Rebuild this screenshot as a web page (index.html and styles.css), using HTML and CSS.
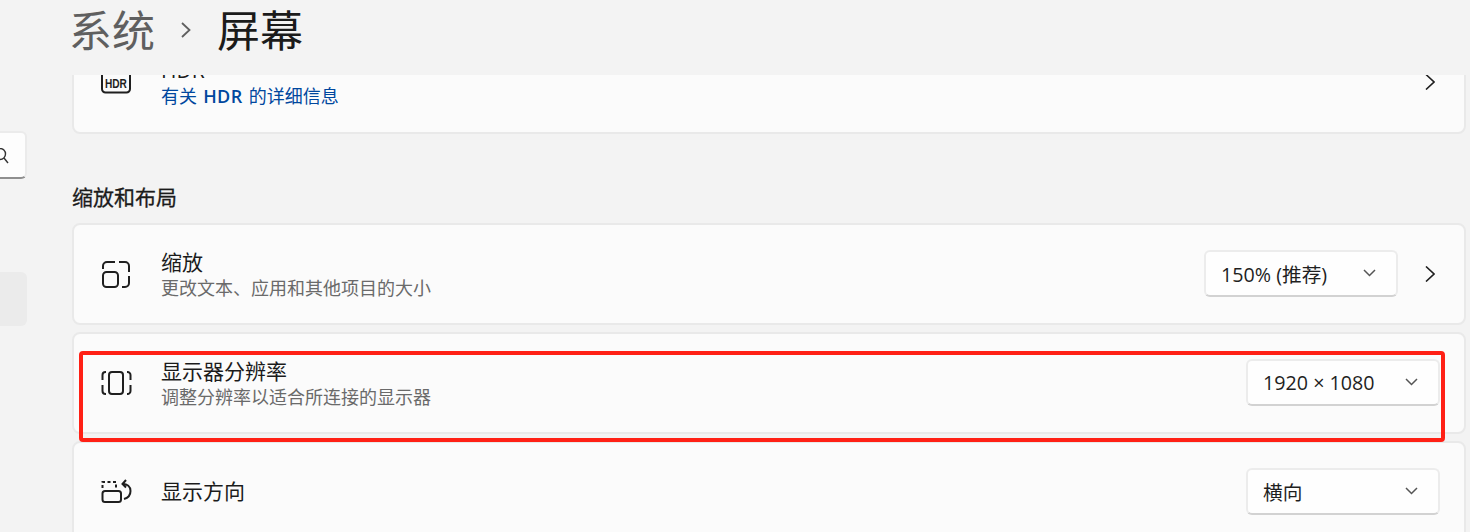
FILE: index.html
```html
<!DOCTYPE html>
<html lang="zh-CN">
<head>
<meta charset="utf-8">
<title>屏幕</title>
<link rel="stylesheet" href="styles.css">
</head>
<body>
<div class="app">
  <aside class="sidebar">
    <div class="search">
      <svg class="search-icon" width="12" height="18" viewBox="0 0 12 18"><circle cx="0" cy="6" r="5.500"/><path d="M4 10l4 5"/></svg>
    </div>
    <div class="nav-selected"></div>
  </aside>
  <main class="main">
    <header class="header">
      <span class="crumb">系统</span>
      <svg class="crumb-sep" width="12" height="18" viewBox="0 0 12 18"><path d="M2 2l7.500 7L2 16"/></svg>
      <span class="page">屏幕</span>
    </header>
    <div class="content">
      <section class="card card-first">
        <span class="icon-box">
          <svg class="icon" width="30" height="30" viewBox="0 0 30 30"><path d="M1 1v24a3.500 3.500 0 0 0 3.500 3.500h21a3.500 3.500 0 0 0 3.500-3.500V1"/></svg>
          <span class="hdr-glyph">HDR</span>
        </span>
        <div class="text">
          <div class="title">HDR</div>
          <a class="link">有关 <span class="latin">HDR</span> 的详细信息</a>
        </div>
        <svg class="chevron" width="10" height="16" viewBox="0 0 10 16"><path d="M1 .5l8 7.500-8 7.500"/></svg>
      </section>

      <h2 class="section">缩放和布局</h2>

      <section class="card">
        <span class="icon-box">
          <svg class="icon" width="30" height="30" viewBox="0 0 30 30">
            <path d="M2 10V7a4 4 0 0 1 4-4h8M18 3h6a4 4 0 0 1 4 4v6M28 17v7a4 4 0 0 1-4 4h-3"/>
            <rect x="2" y="13" width="15" height="15" rx="3.500"/>
          </svg>
        </span>
        <div class="text">
          <div class="title">缩放</div>
          <div class="sub">更改文本、应用和其他项目的大小</div>
        </div>
        <div class="select"><span>150% (推荐)</span><svg class="caret" width="13" height="8" viewBox="0 0 13 8"><path d="M1 1l5.500 5.500L12 1"/></svg></div>
        <svg class="chevron" width="10" height="16" viewBox="0 0 10 16"><path d="M1 .5l8 7.500-8 7.500"/></svg>
      </section>

      <section class="card">
        <span class="icon-box">
          <svg class="icon" width="30" height="30" viewBox="0 0 30 30">
            <rect x="8" y="4" width="14" height="22" rx="3"/>
            <path d="M5 4h-.5a3 3 0 0 0-3 3v5M1.500 17v6a3 3 0 0 0 3 3H5M26 4h.5a3 3 0 0 1 3 3v5M29.500 17v6a3 3 0 0 1-3 3H26"/>
          </svg>
        </span>
        <div class="text">
          <div class="title">显示器分辨率</div>
          <div class="sub">调整分辨率以适合所连接的显示器</div>
        </div>
        <div class="select"><span>1920 × 1080</span><svg class="caret" width="13" height="8" viewBox="0 0 13 8"><path d="M1 1l5.500 5.500L12 1"/></svg></div>
      </section>

      <section class="card">
        <span class="icon-box">
          <svg class="icon" width="32" height="30" viewBox="0 0 32 30">
            <path stroke-dasharray="3 2.500" d="M1.500 11V5h13.500v6"/>
            <rect x="1.500" y="14" width="18.500" height="11" rx="2.500"/>
            <path d="M22 7c4 0 7.500 2.500 7.500 7s-3 7-6.500 8M25 3l-3.500 4 3.500 3.500"/>
          </svg>
        </span>
        <div class="text text-single">
          <div class="title">显示方向</div>
        </div>
        <div class="select"><span>横向</span><svg class="caret" width="13" height="8" viewBox="0 0 13 8"><path d="M1 1l5.500 5.500L12 1"/></svg></div>
      </section>
    </div>
  </main>
</div>
<div class="highlight"></div>
</body>
</html>
```

FILE: styles.css
```css
* { box-sizing: border-box; }
html, body { margin: 0; height: 532px; overflow: hidden; }
body {
  position: relative;
  background: #f3f3f3;
  color: #1b1b1b;
  font-family: "Open Sans", "Noto Sans CJK SC", sans-serif;
}
.app { display: flex; height: 532px; }

.sidebar { width: 72px; flex: none; display: flex; flex-direction: column; align-items: flex-start; }
.search {
  width: 27px; height: 48px; margin-top: 131px;
  background: #fdfdfd;
  border: 2px solid #ebebeb;
  border-left: 0;
  border-bottom: 2px solid #8f8f8f;
  border-radius: 0 6px 6px 0;
  display: flex; align-items: center;
}
.search-icon { fill: none; stroke: #333; stroke-width: 1.4; margin-top: 4px; }
.nav-selected {
  width: 27px; height: 54px; margin-top: 93px;
  background: #ebebeb;
  border-radius: 0 6px 6px 0;
}

.main { flex: 1; min-width: 0; padding-right: 4px; display: flex; flex-direction: column; }
.header { height: 75px; flex: none; display: flex; align-items: center; padding-bottom: 14px; font-size: 43px; line-height: 56px; }
.crumb { color: #5f5f5f; margin-left: -3px; }
.crumb-sep { fill: none; stroke: #5f5f5f; stroke-width: 1.800; margin: 0 25px 2px 25px; }
.page { color: #1b1b1b; }

.content { flex: 1; min-height: 0; overflow: hidden; }
.card {
  height: 102px;
  margin-bottom: 7px;
  padding: 0 24px 0 27px;
  background: #fbfbfb;
  border: 2px solid #e9e9e9;
  border-radius: 8px;
  display: flex;
  align-items: center;
}
.card-first { height: 104px; margin-top: -45px; margin-bottom: 0; }
.icon-box { position: relative; width: 60px; height: 30px; flex: none; display: block; }
.icon { display: block; fill: none; stroke: #1f1f1f; stroke-width: 2; overflow: visible; }
.hdr-glyph {
  position: absolute; left: 4px; top: 12px;
  font: 700 13.500px/16px "Liberation Sans", sans-serif;
  color: #1f1f1f;
  transform: scaleX(.75);
  transform-origin: left center;
}
.card-first .icon-box { margin-top: -6px; }
.text { flex: 1; min-width: 0; padding-top: 1px; }
.text-single { padding: 0 0 2px; }
.title { font-size: 21px; line-height: 27px; color: #1b1b1b; }
.sub { font-size: 18px; line-height: 24px; color: #6a6a6a; }
.link { display: block; font-size: 18px; line-height: 24px; color: #00479e; word-spacing: 1.500px; }
.latin { font-weight: 600; letter-spacing: .4px; }

.select {
  width: 194px; height: 47px; flex: none;
  margin-bottom: 2px;
  padding: 0 20px 0 15px;
  background: #fefefe;
  border: 2px solid #ececec;
  border-bottom-color: #d2d2d2;
  border-radius: 6px;
  display: flex; align-items: center; justify-content: space-between;
  font-size: 19.700px;
  color: #1f1f1f;
}
.caret { fill: none; stroke: #555; stroke-width: 1.500; }
.chevron { flex: none; margin: 0 5px 0 27px; fill: none; stroke: #1f1f1f; stroke-width: 1.600; }

.section { margin: 49px 0 12px; height: 28px; font-size: 21px; line-height: 28px; font-weight: 400; color: #1b1b1b; -webkit-text-stroke: 0.3px #1b1b1b; }

.highlight {
  position: absolute; left: 79px; top: 351px;
  width: 1366px; height: 91px;
  border: 4px solid #ff2015;
  border-radius: 4px;
  pointer-events: none;
}
```
